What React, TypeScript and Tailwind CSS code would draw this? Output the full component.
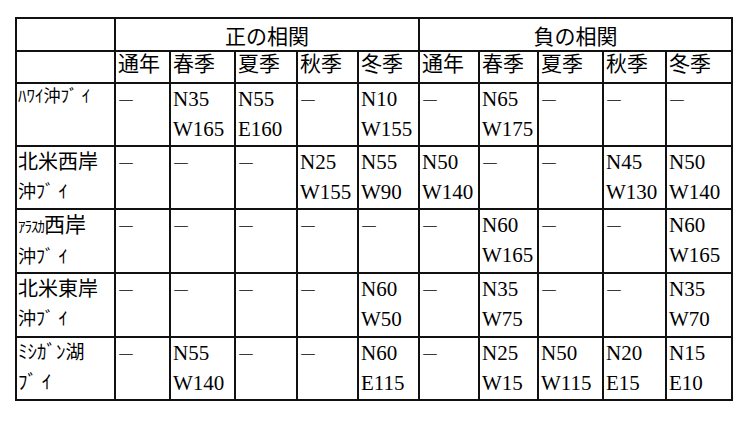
import React from "react";

type Cell = string[] | null; // null => dash

const rows: { label: React.ReactNode; cells: Cell[] }[] = [
  {
    label: (
      <div className="text-[17px] leading-[24px] pt-[1px] whitespace-nowrap">ﾊﾜｲ沖ﾌﾞ ｲ</div>
    ),
    cells: [null, ["N35", "W165"], ["N55", "E160"], null, ["N10", "W155"], null, ["N65", "W175"], null, null, null],
  },
  {
    label: (
      <>
        <div className="text-[20px] leading-[30px]">北米西岸</div>
        <div className="text-[18px] leading-[30px]">沖ﾌﾞ ｲ</div>
      </>
    ),
    cells: [null, null, null, ["N25", "W155"], ["N55", "W90"], ["N50", "W140"], null, null, ["N45", "W130"], ["N50", "W140"]],
  },
  {
    label: (
      <>
        <div className="text-[20px] leading-[30px] whitespace-nowrap">
          <span className="text-[15px] tracking-[-1px]">ｱﾗｽｶ</span>
          <span className="text-[21px]">西岸</span>
        </div>
        <div className="text-[18px] leading-[30px]">沖ﾌﾞ ｲ</div>
      </>
    ),
    cells: [null, null, null, null, null, null, ["N60", "W165"], null, null, ["N60", "W165"]],
  },
  {
    label: (
      <>
        <div className="text-[20px] leading-[30px]">北米東岸</div>
        <div className="text-[18px] leading-[30px]">沖ﾌﾞ ｲ</div>
      </>
    ),
    cells: [null, null, null, null, ["N60", "W50"], null, ["N35", "W75"], null, null, ["N35", "W70"]],
  },
  {
    label: (
      <>
        <div className="text-[19px] leading-[30px] whitespace-nowrap">ﾐｼｶﾞﾝ湖</div>
        <div className="text-[19px] leading-[30px]">ﾌﾞ ｲ</div>
      </>
    ),
    cells: [null, ["N55", "W140"], null, null, ["N60", "E115"], null, ["N25", "W15"], ["N50", "W115"], ["N20", "E15"], ["N15", "E10"]],
  },
];

const seasons = ["通年", "春季", "夏季", "秋季", "冬季"];

function Dash() {
  return <span className="font-[family-name:'Noto_Sans_CJK_JP',sans-serif] text-[16px] align-[2px]">―</span>;
}

export default function App() {
  return (
    <div className="w-[750px] h-[422px] bg-white pt-[17px] pl-[15px] font-[family-name:'Liberation_Serif','Noto_Sans_CJK_JP',serif] text-black">
      <div className="grid w-fit bg-[#111] gap-[2px] p-[2px] grid-cols-[97px_53px_63px_60px_59px_59px_58px_57px_63px_61px_64px] grid-rows-[31px_30px_61px_61px_62px_62px_61px]">
        <div className="bg-white" />
        <div className="col-span-5 bg-white text-center text-[21px] leading-[30px] pt-[3px]">正の相関</div>
        <div className="col-span-5 bg-white text-center text-[21px] leading-[30px] pt-[3px]">負の相関</div>
        <div className="bg-white" />
        {[...seasons, ...seasons].map((s, i) => (
          <div key={i} className="bg-white pl-[2px] text-[21px] leading-[24px] whitespace-nowrap">
            {s}
          </div>
        ))}
        {rows.map((r, ri) => (
          <React.Fragment key={ri}>
            <div className="bg-white pl-[1px] overflow-hidden">{r.label}</div>
            {r.cells.map((c, ci) => (
              <div key={ci} className="bg-white pl-[2px] text-[21px] leading-[30px] whitespace-nowrap">
                {c === null ? (
                  <div>
                    <Dash />
                  </div>
                ) : (
                  c.map((t, ti) => <div key={ti}>{t}</div>)
                )}
              </div>
            ))}
          </React.Fragment>
        ))}
      </div>
    </div>
  );
}
